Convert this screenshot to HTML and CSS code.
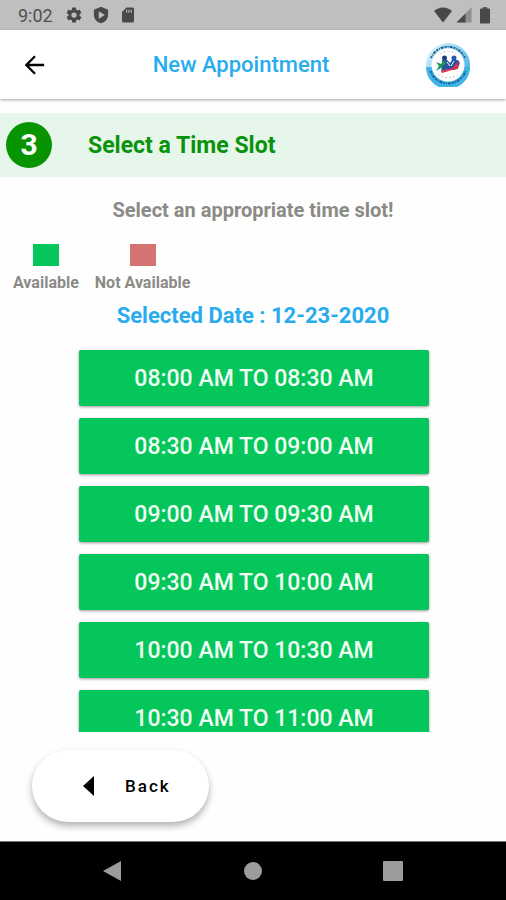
FILE: index.html
```html
<!DOCTYPE html>
<html lang="en">
  <head>
    <meta charset="UTF-8" />
    <meta name="viewport" content="width=device-width, initial-scale=1.0" />
    <title>New Appointment</title>
    <link rel="stylesheet" href="styles.css">
  </head>
  <body>
    <!-- Status bar -->
    <div class="status-bar">
      <span class="clock">9:02</span>
      <svg class="status-icon" viewBox="0 0 24 24" aria-hidden="true">
        <path fill-rule="evenodd" d="M19.4 13a7.500 7.500 0 0 0 0-2l2.200-1.700a.5.5 0 0 0 .1-.6l-2-3.500a.5.5 0 0 0-.6-.2l-2.500 1a7.300 7.300 0 0 0-1.700-1l-.4-2.600a.5.5 0 0 0-.5-.4h-4a.5.5 0 0 0-.5.4l-.4 2.600a7.300 7.300 0 0 0-1.700 1l-2.500-1a.5.5 0 0 0-.6.2l-2 3.500a.5.5 0 0 0 .1.600L4.600 11a7.500 7.500 0 0 0 0 2l-2.200 1.700a.5.5 0 0 0-.1.600l2 3.500c.1.200.4.300.6.200l2.500-1a7.300 7.300 0 0 0 1.700 1l.4 2.600c0 .2.200.4.500.4h4c.3 0 .5-.2.500-.4l.4-2.600a7.300 7.300 0 0 0 1.700-1l2.500 1c.2.100.5 0 .6-.2l2-3.500a.5.5 0 0 0-.1-.6zM12 15.500a3.500 3.500 0 1 1 0-7 3.500 3.500 0 0 1 0 7z" />
      </svg>
      <svg class="status-icon" viewBox="0 0 24 24" aria-hidden="true">
        <path fill-rule="evenodd" d="M12 1 2.500 5v6.500c0 5.500 4 10 9.500 11.500 5.500-1.500 9.500-6 9.500-11.500V5zM9 7l8 5-8 5z" />
      </svg>
      <svg class="status-icon" viewBox="0 0 24 24" aria-hidden="true">
        <path fill-rule="evenodd" d="M18 2h-8L4 8v12a2 2 0 0 0 2 2h12a2 2 0 0 0 2-2V4a2 2 0 0 0-2-2zM9.500 5h1.500v4H9.500zM12.500 5H14v4h-1.500zM15.500 5H17v4h-1.500z" />
      </svg>
      <div class="status-right">
        <svg class="status-icon wifi" viewBox="0 0 24 20" aria-hidden="true">
          <path d="M12 20 0 4.500C3.500 1.700 7.600 0 12 0s8.500 1.700 12 4.500z" />
        </svg>
        <svg class="status-icon" viewBox="0 0 24 24" aria-hidden="true">
          <path opacity=".4" d="M2 22h20V2z" />
          <path d="M2 22h12V10z" />
        </svg>
        <svg class="status-icon battery" viewBox="0 0 14 24" aria-hidden="true">
          <path d="M12.500 3H10V1H4v2H1.500C.7 3 0 3.700 0 4.500v18c0 .8.7 1.500 1.500 1.500h11c.8 0 1.500-.7 1.500-1.500v-18c0-.8-.7-1.500-1.500-1.500z" />
        </svg>
      </div>
    </div>

    <header>
      <button class="icon-btn" type="button" aria-label="Go back">
        <svg class="arrow" viewBox="0 0 24 24" aria-hidden="true">
          <path d="M22 12H3.500M12 2.500 2.500 12l9.500 9.500" />
        </svg>
      </button>
      <h1>New Appointment</h1>
      <svg class="logo" viewBox="0 0 44 44" role="img" aria-label="Clinic logo">
        <defs>
          <linearGradient id="ring" x1="0" y1="0" x2="1" y2="1">
            <stop offset="0" stop-color="#f2fafd" />
            <stop offset="0.5" stop-color="#86d0f0" />
            <stop offset="1" stop-color="#1c9ddb" />
          </linearGradient>
        </defs>
        <circle cx="22" cy="22" r="22" fill="url(#ring)" />
        <path d="M0 24a22 22 0 0 0 44 0z" fill="#3fb4e6" />
        <circle cx="22" cy="22" r="16.500" fill="#fff" />
        <path d="M5 15a18.500 18.500 0 0 1 34 0" class="ring-text" />
        <path d="M4.500 28a18.500 18.500 0 0 0 35 0" class="ring-text" />
        <path d="M14 11a14 14 0 0 1 16 0M12 31a15 15 0 0 0 20 0" class="ring-small" />
        <circle cx="18.500" cy="15" r="2.500" fill="#173f86" />
        <circle cx="28" cy="15" r="2.500" fill="#2359a6" />
        <path d="M16 17h5l3 3 2-3h6l2 3-2 5-4 2-5-1-4 1-4 1 1-5z" fill="#27549f" />
        <path d="m10 19 5 2 3-4 2 3-5 5-5 3 3-5z" fill="#18955b" />
        <path d="m15 28 7-2 5-1 3-4 3-3-1 8-6 1-10 3z" fill="#e22f4f" />
        <path d="m21 19 3 4M28 18l-3 5" stroke="#fff" />
      </svg>
    </header>

    <main>
      <section class="step">
        <span class="step-number">3</span>
        <h2>Select a Time Slot</h2>
      </section>

      <p class="hint">Select an appropriate time slot!</p>

      <ul class="legend">
        <li><span class="swatch available"></span>Available</li>
        <li><span class="swatch not-available"></span>Not Available</li>
      </ul>

      <p class="selected-date">Selected Date : 12-23-2020</p>

      <div class="slots">
        <button class="slot" type="button">08:00 AM TO 08:30 AM</button>
        <button class="slot" type="button">08:30 AM TO 09:00 AM</button>
        <button class="slot" type="button">09:00 AM TO 09:30 AM</button>
        <button class="slot" type="button">09:30 AM TO 10:00 AM</button>
        <button class="slot" type="button">10:00 AM TO 10:30 AM</button>
        <button class="slot" type="button">10:30 AM TO 11:00 AM</button>
      </div>
    </main>

    <footer>
      <button class="back-btn" type="button">
        <svg viewBox="0 0 11 20" aria-hidden="true"><path d="M11 0v20L0 10z" /></svg>
        Back
      </button>
    </footer>

    <!-- Android navigation -->
    <nav>
      <button class="nav-btn" type="button" aria-label="Back">
        <svg viewBox="0 0 20 20" aria-hidden="true"><path d="M18 0v20L0 10z" /></svg>
      </button>
      <button class="nav-btn" type="button" aria-label="Home">
        <svg viewBox="0 0 20 20" aria-hidden="true"><circle cx="10" cy="10" r="9" /></svg>
      </button>
      <button class="nav-btn" type="button" aria-label="Recent apps">
        <svg viewBox="0 0 20 20" aria-hidden="true"><rect width="20" height="20" rx="1" /></svg>
      </button>
    </nav>
  </body>
</html>
```

FILE: styles.css
```css
* {
  box-sizing: border-box;
}

body {
  font-family: Roboto, "Liberation Sans", sans-serif;
  margin: 0;
  height: 100vh;
  display: flex;
  flex-direction: column;
  background-color: #fefefe;
  color: #8b8b86;
}

h1,
h2,
p,
ul {
  margin: 0;
  padding: 0;
}

button {
  font-family: inherit;
  border: none;
  padding: 0;
  cursor: pointer;
}

.status-bar {
  height: 30px;
  flex-shrink: 0;
  display: flex;
  align-items: center;
  gap: 9px;
  padding: 0 16px 0 18px;
  background-color: #bfbfbf;
  color: #505050;
}

.clock {
  font-size: 18px;
  margin-right: 3px;
}

.status-icon {
  width: 18px;
  height: 18px;
  fill: #484848;
}

.status-right {
  display: flex;
  align-items: center;
  gap: 3px;
  margin-left: auto;
}

.wifi {
  width: 18px;
}

.battery {
  width: 10px;
  margin-left: 4px;
}

header {
  height: 69px;
  flex-shrink: 0;
  display: flex;
  align-items: center;
  justify-content: space-between;
  padding: 0 36px 0 24px;
  background-color: white;
  box-shadow: 0 1px 3px rgba(0, 0, 0, 0.35);
}

.icon-btn {
  width: 32px;
  height: 44px;
  background: none;
  text-align: left;
}

.arrow {
  display: block;
  width: 22px;
  height: 22px;
  fill: none;
  stroke: black;
  stroke-width: 2.5;
}

h1 {
  font-size: 22px;
  font-weight: 500;
  color: #29acee;
}

.logo {
  width: 44px;
  height: 44px;
}

.ring-text {
  fill: none;
  stroke: #1c5f95;
  stroke-width: 2;
  stroke-dasharray: 2 1 1 1 3 1;
}

.ring-small {
  fill: none;
  stroke: #b9bfcc;
  stroke-dasharray: 2 2;
}

main {
  flex: 1;
  min-height: 0;
  display: flex;
  flex-direction: column;
  padding-top: 14px;
}

.step {
  height: 64px;
  flex-shrink: 0;
  display: flex;
  align-items: center;
  gap: 36px;
  padding-left: 6px;
  background-color: #e6f6ea;
  color: #089308;
}

.step-number {
  width: 46px;
  height: 46px;
  border-radius: 50%;
  background-color: #079400;
  color: white;
  font-size: 30px;
  font-weight: bold;
  line-height: 46px;
  text-align: center;
}

h2 {
  font-size: 23px;
  font-weight: bold;
}

.hint {
  margin-top: 20px;
  font-size: 20px;
  font-weight: bold;
  line-height: 26px;
  text-align: center;
}

.legend {
  display: flex;
  gap: 16px;
  margin-top: 21px;
  padding-left: 13px;
  list-style: none;
  font-size: 16px;
  font-weight: bold;
  line-height: 18px;
}

.legend li {
  display: flex;
  flex-direction: column;
  align-items: center;
  gap: 8px;
}

.swatch {
  width: 26px;
  height: 22px;
}

.available {
  background-color: #04c65b;
}

.not-available {
  background-color: #d57372;
}

.selected-date {
  margin-top: 10px;
  font-size: 22px;
  font-weight: bold;
  line-height: 28px;
  text-align: center;
  color: #29acee;
}

.slots {
  flex: 1;
  min-height: 0;
  display: flex;
  flex-direction: column;
  gap: 12px;
  margin-top: 18px;
  padding: 2px 77px 0 79px;
  overflow: hidden;
}

.slot {
  height: 56px;
  flex-shrink: 0;
  border-radius: 2px;
  background-color: #04c65b;
  color: #f0fff4;
  font-size: 23px;
  font-weight: 500;
  box-shadow: 0 1px 3px rgba(0, 0, 0, 0.4);
}

footer {
  flex-shrink: 0;
  padding: 18px 32px 19px;
}

.back-btn {
  width: 177px;
  height: 72px;
  display: flex;
  align-items: center;
  gap: 31px;
  padding-left: 51px;
  border-radius: 36px;
  background-color: white;
  color: black;
  font-size: 17px;
  font-weight: 500;
  letter-spacing: 2px;
  box-shadow: 0 4px 7px rgba(0, 0, 0, 0.3);
}

.back-btn svg {
  width: 11px;
  height: 20px;
}

nav {
  height: 59px;
  flex-shrink: 0;
  display: flex;
  justify-content: center;
  gap: 80px;
  border-top: 1px solid #777;
  background-color: black;
}

.nav-btn {
  width: 60px;
  display: flex;
  align-items: center;
  justify-content: center;
  background: none;
}

.nav-btn svg {
  width: 20px;
  height: 20px;
  fill: #9c9c9c;
}
```
